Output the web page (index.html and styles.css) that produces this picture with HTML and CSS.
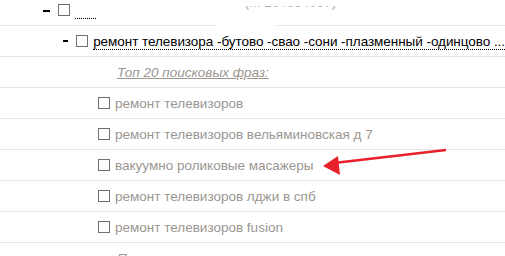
FILE: index.html
```html
<!DOCTYPE html>
<html>
<head>
  <meta charset="UTF-8">
  <title>Фразы</title>
  <link rel="stylesheet" href="styles.css">
</head>
<body>
  <div class="tree">
    <div class="row level-0">
      <span class="minus"></span>
      <span class="box"></span>
      <span class="label">
        <a class="link stub"></a>
        <span class="meta">(М 204034097)</span>
      </span>
      <!-- закрытая часть скриншота -->
      <div class="mask mask-top"></div>
      <div class="mask mask-gap"></div>
    </div>
    <div class="row level-1">
      <span class="minus"></span>
      <span class="box"></span>
      <span class="label"><a class="link">ремонт телевизора -бутово -свао -сони -плазменный -одинцово ...</a></span>
    </div>
    <div class="row caption">
      <a class="title">Топ 20 поисковых фраз:</a>
    </div>
    <div class="row leaf">
      <span class="box"></span>
      <span class="label phrase">ремонт телевизоров</span>
    </div>
    <div class="row leaf">
      <span class="box"></span>
      <span class="label phrase">ремонт телевизоров вельяминовская д 7</span>
    </div>
    <div class="row leaf">
      <span class="box"></span>
      <span class="label phrase">вакуумно роликовые масажеры</span>
    </div>
    <div class="row leaf">
      <span class="box"></span>
      <span class="label phrase">ремонт телевизоров лджи в спб</span>
    </div>
    <div class="row leaf">
      <span class="box"></span>
      <span class="label phrase">ремонт телевизоров fusion</span>
    </div>
    <div class="row caption">
      <a class="title">Показать все</a>
    </div>
  </div>

  <svg class="arrow" width="505" height="256" viewBox="0 0 505 256">
    <line x1="446" y1="150" x2="334" y2="163" stroke="#e8202a" stroke-width="2.5"/>
    <polygon points="323,166 338,156 340,175" fill="#e8202a"/>
  </svg>
</body>
</html>
```

FILE: styles.css
```css
body {
  font-family: Arial, "Liberation Sans", sans-serif;
  font-size: 13.5px;
  margin: 0;
  background: #fff;
  overflow: hidden;
  position: relative;
  width: 505px;
  height: 256px;
}
.tree {
  margin-top: -4px;
}
.row {
  height: 30px;
  border-bottom: 1px solid #e6e6e6;
  display: flex;
  align-items: center;
  white-space: nowrap;
  position: relative;
}
.level-0 {
  padding-left: 43px;
  align-items: flex-start;
  padding-top: 8px;
  box-sizing: border-box;
  height: 30px;
}
.level-1 {
  padding-left: 63px;
}
.level-1 .link {
  letter-spacing: -0.05px;
}
.leaf {
  padding-left: 98px;
}
.caption {
  padding-left: 117px;
}
.minus {
  width: 7px;
  height: 2px;
  background: #000;
  margin-right: 8px;
}
.level-0 .minus {
  margin-top: 6px;
}
.box {
  width: 10px;
  height: 10px;
  border: 1px solid #707070;
  background: #fff;
  margin-right: 5px;
  flex-shrink: 0;
}
.link {
  color: #000;
  border-bottom: 1px dotted #000;
  text-decoration: none;
}
.stub {
  display: inline-block;
  width: 21px;
  height: 14px;
  vertical-align: top;
}
.meta {
  color: #b0b0b0;
  margin-left: 145px;
  vertical-align: top;
  position: relative;
  top: -9px;
}
.label {
  line-height: 15px;
}
.phrase {
  color: #9b9691;
}
.title {
  color: #9b9691;
  font-style: italic;
  text-decoration: underline;
}
.mask {
  position: absolute;
  background: #fff;
}
.mask-top {
  left: 75px;
  top: 0;
  width: 400px;
  height: 10px;
}
.mask-gap {
  left: 216px;
  top: 14px;
  width: 60px;
  bottom: -1px;
}
.arrow {
  position: absolute;
  left: 0;
  top: 0;
}
```
